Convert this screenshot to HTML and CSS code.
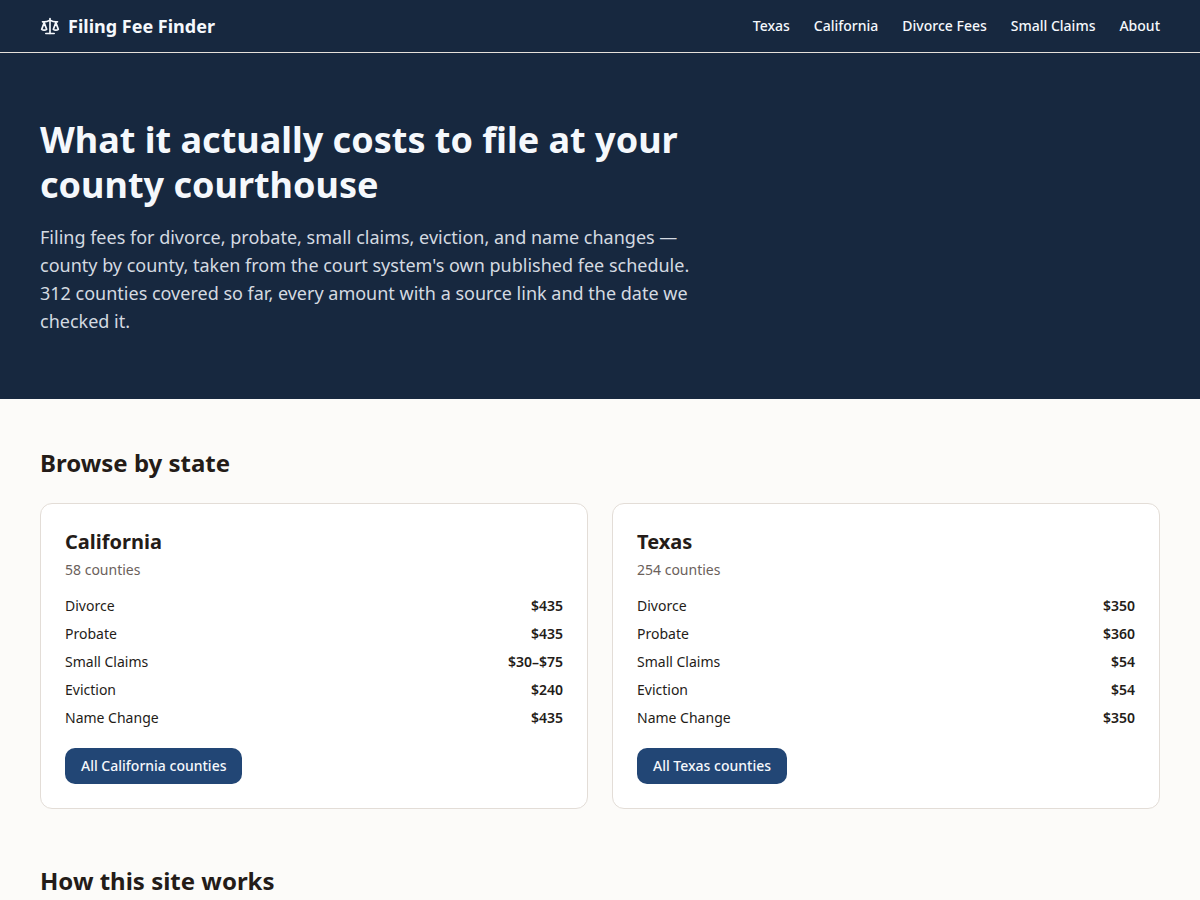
FILE: index.html
```html
<!DOCTYPE html>
<html lang="en">
<head>
<meta charset="utf-8">
<meta name="viewport" content="width=device-width, initial-scale=1">
<title>Filing Fee Finder</title>
<link rel="stylesheet" href="styles.css">
</head>
<body>
<header class="site-header">
  <div class="container bar">
    <a class="brand" href="#">
      <svg class="brand-icon" viewBox="0 0 24 24" aria-hidden="true"><path d="m16 16 3-8 3 8c-.87.65-1.92 1-3 1s-2.130-.35-3-1Z"/><path d="m2 16 3-8 3 8c-.87.65-1.920 1-3 1s-2.130-.35-3-1Z"/><path d="M7 21h10"/><path d="M12 3v18"/><path d="M3 7h2c2 0 5-1 7-2 2 1 5 2 7 2h2"/></svg>
      <span>Filing Fee Finder</span>
    </a>
    <nav class="nav" aria-label="Main">
      <a href="#">Texas</a>
      <a href="#">California</a>
      <a href="#">Divorce Fees</a>
      <a href="#">Small Claims</a>
      <a href="#">About</a>
    </nav>
  </div>
</header>
<main>
  <section class="hero">
    <div class="container">
      <h1 class="hero-title">What it actually costs to file at your county courthouse</h1>
      <p class="hero-text">Filing fees for divorce, probate, small claims, eviction, and name changes — county by county, taken from the court system's own published fee schedule. 312 counties covered so far, every amount with a source link and the date we checked it.</p>
    </div>
  </section>
  <div class="container content">
    <section>
      <h2 class="section-title">Browse by state</h2>
      <div class="cards">
        <article class="card">
          <h3 class="card-title">California</h3>
          <p class="count">58 counties</p>
          <dl class="fees">
            <div class="fee"><dt>Divorce</dt><dd>$435</dd></div>
            <div class="fee"><dt>Probate</dt><dd>$435</dd></div>
            <div class="fee"><dt>Small Claims</dt><dd>$30–$75</dd></div>
            <div class="fee"><dt>Eviction</dt><dd>$240</dd></div>
            <div class="fee"><dt>Name Change</dt><dd>$435</dd></div>
          </dl>
          <a class="button" href="#">All California counties</a>
        </article>
        <article class="card">
          <h3 class="card-title">Texas</h3>
          <p class="count">254 counties</p>
          <dl class="fees">
            <div class="fee"><dt>Divorce</dt><dd>$350</dd></div>
            <div class="fee"><dt>Probate</dt><dd>$360</dd></div>
            <div class="fee"><dt>Small Claims</dt><dd>$54</dd></div>
            <div class="fee"><dt>Eviction</dt><dd>$54</dd></div>
            <div class="fee"><dt>Name Change</dt><dd>$350</dd></div>
          </dl>
          <a class="button" href="#">All Texas counties</a>
        </article>
      </div>
    </section>
    <section>
      <h2 class="section-title">How this site works</h2>
    </section>
  </div>
</main>
</body>
</html>
```

FILE: styles.css
```css
* { box-sizing: border-box; }
body, h1, h2, h3, p, dl, dd { margin: 0; }
body {
  background: #fcfbf9;
  color: #241c18;
  font-family: "Noto Sans", sans-serif;
  font-size: 14px;
  line-height: 20px;
}
a { color: inherit; text-decoration: none; }
.container { max-width: 1200px; margin: 0 auto; padding: 0 40px; }
.site-header { background: #17283f; color: #f5f8fc; border-bottom: 1px solid #e6e1db; }
.bar { display: flex; align-items: center; justify-content: space-between; padding-top: 12px; padding-bottom: 12px; }
.brand { display: flex; align-items: center; gap: 8px; font-size: 18px; line-height: 28px; font-weight: 700; }
.brand-icon { width: 20px; height: 20px; fill: none; stroke: currentColor; stroke-width: 2; stroke-linecap: round; stroke-linejoin: round; }
.nav { display: flex; gap: 24px; font-weight: 500; }
.hero { background: #17283f; color: #f5f8fc; padding: 64px 0; }
.hero-title { max-width: 672px; font-size: 36px; line-height: 45px; font-weight: 700; }
.hero-text { max-width: 672px; margin-top: 16px; font-size: 18px; line-height: 28px; color: #d4dae1; }
.content { display: grid; gap: 56px; padding-top: 48px; }
.section-title { font-size: 24px; line-height: 32px; font-weight: 700; }
.cards { display: grid; grid-template-columns: 1fr 1fr; gap: 24px; margin-top: 24px; }
.card { padding: 24px; background: #fff; border: 1px solid #e3ddd7; border-radius: 12px; }
.card-title { font-size: 20px; line-height: 28px; font-weight: 700; }
.count { color: #6b615b; margin-top: 4px; }
.fees { display: grid; gap: 8px; margin: 16px 0 20px; }
.fee { display: flex; justify-content: space-between; }
.fee dd { font-weight: 600; }
.button { display: inline-block; padding: 8px 16px; border-radius: 10px; background: #224675; color: #f5f8fc; font-weight: 500; }
```
